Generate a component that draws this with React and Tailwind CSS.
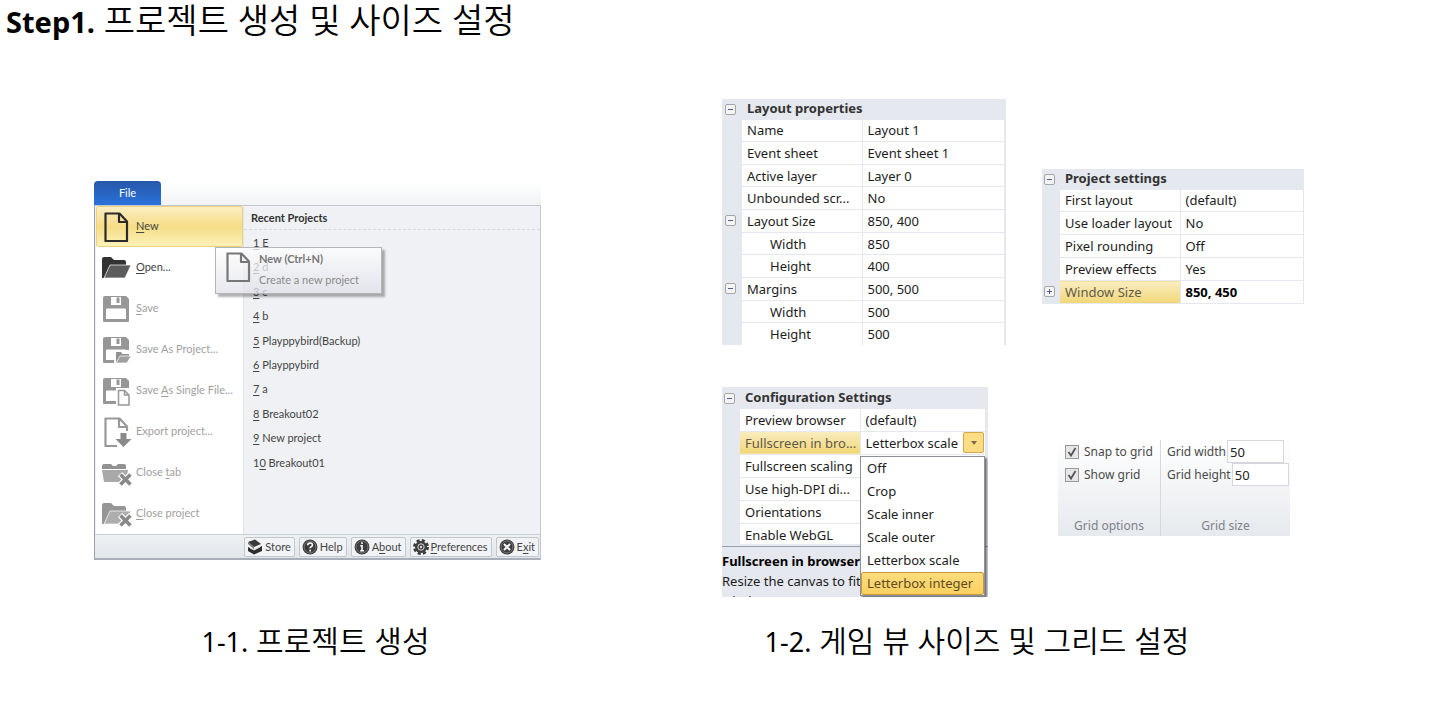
import { useState } from 'react';

const DocShape = ({ color, back = '#fff' }) => (
  <path d="M3.500 1.500h14l7.500 8v19.500H3.500zM17 2v8h7.500" fill={back} stroke={color} strokeWidth="2.200" strokeLinejoin="round" />
);

const FloppyShape = ({ color }) => (
  <>
    <path d="M3 2h21l3 3v22a1 1 0 0 1-1 1H2a1 1 0 0 1-1-1V4a2 2 0 0 1 2-2z" fill={color} />
    <path d="M9 3h10v8H9z" fill="#fff" />
    <path d="M14.500 3.500h3v5.500h-3z" fill={color} />
    <path d="M4 15.500a1 1 0 0 1 1-1h18a1 1 0 0 1 1 1V25H4z" fill="#fff" />
  </>
);

const FolderShape = ({ front, back }) => (
  <>
    <path d="M0 6a2 2 0 0 1 2-2h7l3 3h10a2 2 0 0 1 2 2v4H9L2 25H0z" fill={back} />
    <path d="M8 12h21l-6 13H2z" fill={front} stroke="#fff" strokeWidth=".7" />
  </>
);

const CrossShape = () => (
  <>
    <path d="M18 16l11 11M29 16l-11 11" stroke="#fff" strokeWidth="6" />
    <path d="M18.500 16.500l10 10M28.500 16.500l-10 10" stroke="#8a8a8a" strokeWidth="3.600" />
  </>
);

const icons = {
  doc: <DocShape color="#2b2b2b" back="none" />,
  open: <FolderShape front="#5c5c5c" back="#333" />,
  save: <FloppyShape color="#979797" />,
  saveProject: (
    <>
      <FloppyShape color="#979797" />
      <path d="M13 15h17v14H12z" fill="#fff" />
      <path d="M14 17h5l1.500 2H27v3H18l-4 6z" fill="#929292" />
      <path d="M18 21h11l-4 7H14z" fill="#a0a0a0" stroke="#fff" strokeWidth=".7" />
    </>
  ),
  saveFile: (
    <>
      <FloppyShape color="#979797" />
      <path d="M14 12h15v18H14z" fill="#fff" />
      <path d="M16.500 14.500h6l4.500 4.500v10H16.500zM22.500 14.500v4.500H27" fill="#fff" stroke="#979797" strokeWidth="1.500" />
    </>
  ),
  exportDoc: (
    <>
      <DocShape color="#999" />
      <path d="M15 14h15v16H15z" fill="#fff" />
      <path d="M18.500 16h6v6h5l-8 8-8-8h5z" fill="#8a8a8a" />
    </>
  ),
  closeTab: (
    <>
      <path d="M0 8a2 2 0 0 1 2-2h7l2 2h3l2-2h6a2 2 0 0 1 2 2v3H0z" fill="#929292" />
      <path d="M0 12h26l-2 12H2z" fill="#a9a9a9" />
      <CrossShape />
    </>
  ),
  closeProject: (
    <>
      <FolderShape front="#adadad" back="#969696" />
      <CrossShape />
    </>
  ),
};

const MenuIcon = ({ name }) => (
  <svg viewBox="0 0 30 30" className="h-[30px] w-[30px] shrink-0">{icons[name]}</svg>
);

const Disc = ({ children }) => (
  <svg viewBox="0 0 16 16" className="h-4 w-4">
    <circle cx="8" cy="8" r="7.500" fill="#3d3d3d" />
    <circle cx="8" cy="8" r="6" fill="none" stroke="#777" />
    {children}
  </svg>
);

const footerIcons = {
  Store: (
    <svg viewBox="0 0 16 16" className="h-4 w-4">
      <path d="M1 3l7-2.500 6 4.500-7 3z" fill="#3a3a3a" />
      <path d="M1 3l6 5v2L1 5z" fill="#777" />
      <path d="M1 8l6 3 8-4v5l-8 3.500L1 12z" fill="#2d2d2d" />
      <path d="M3 9l4 2 6-3" stroke="#ddd" fill="none" />
    </svg>
  ),
  Help: (
    <Disc>
      <path d="M5.700 6.300c0-3 4.800-3 4.800-.3 0 1.700-2.400 1.500-2.400 3.300M8.100 10.700v1.700" fill="none" stroke="#fff" strokeWidth="1.600" />
    </Disc>
  ),
  About: (
    <Disc>
      <path d="M8 3.300v1.800M6.300 6.800H8v4.700M6.200 11.700h3.800" fill="none" stroke="#fff" strokeWidth="1.600" />
    </Disc>
  ),
  Preferences: (
    <svg viewBox="0 0 16 16" className="h-4 w-4">
      <circle cx="8" cy="8" r="6.500" fill="none" stroke="#3d3d3d" strokeWidth="3" strokeDasharray="3 2.100" />
      <circle cx="8" cy="8" r="6" fill="#3d3d3d" />
      <circle cx="8" cy="8" r="3.200" fill="none" stroke="#ddd" />
      <circle cx="8" cy="8" r="1.200" fill="#ddd" />
    </svg>
  ),
  Exit: (
    <Disc>
      <path d="M5 5l6 6M11 5l-6 6" stroke="#fff" strokeWidth="2" />
    </Disc>
  ),
};

// Underlines the accelerator letter at the given index
const Accel = ({ text, at }) => {
  if (at === undefined) return <span>{text}</span>;
  return (
    <span>
      {text.slice(0, at)}
      <u className="underline-offset-2">{text[at]}</u>
      {text.slice(at + 1)}
    </span>
  );
};

const menuItems = [
  { label: 'New', at: 0, icon: 'doc' },
  { label: 'Open...', at: 0, icon: 'open' },
  { label: 'Save', at: 0, icon: 'save', disabled: true },
  { label: 'Save As Project...', icon: 'saveProject', disabled: true },
  { label: 'Save As Single File...', at: 5, icon: 'saveFile', disabled: true },
  { label: 'Export project...', icon: 'exportDoc', disabled: true },
  { label: 'Close tab', at: 6, icon: 'closeTab', disabled: true },
  { label: 'Close project', at: 0, icon: 'closeProject', disabled: true },
];

const recentProjects = [
  'E', 'd', 'c', 'b', 'Playppybird(Backup)', 'Playppybird', 'a', 'Breakout02', 'New project', 'Breakout01',
];

const footerItems = [
  { label: 'Store' },
  { label: 'Help' },
  { label: 'About', at: 1 },
  { label: 'Preferences', at: 0 },
  { label: 'Exit', at: 1 },
];

const FileMenu = () => (
  <div className="relative font-['Lato','Noto_Sans',sans-serif] text-[11px] text-[#444]">
    <div className="flex bg-linear-to-b from-white to-[#f1f3f5]">
      <button className="h-6 w-[67px] rounded-t-sm bg-linear-to-b from-[#2658a8] to-[#2a72dc] text-white">File</button>
    </div>
    <div className="border border-b-2 border-[#c3c8d0] border-b-[#a9aeb8] border-l-[#98a1ae] bg-[#eff1f5]">
      <div className="flex">
        <div className="ml-px w-[148px] border-r border-[#e2e4e8] bg-white">
          {menuItems.map((item) => (
            <button
              key={item.label}
              disabled={item.disabled}
              className={`flex h-[41px] w-full items-center gap-1 whitespace-nowrap pl-[5px] text-left ${
                item.label === 'New' ? 'rounded-xs border border-[#ecd27c] bg-linear-to-b from-[#fbeec2] via-[#f6dd85] to-[#fdf1b8]' : 'border border-transparent'
              } ${item.disabled ? 'text-[#a0a0a0]' : ''}`}
            >
              <MenuIcon name={item.icon} />
              <Accel text={item.label} at={item.at} />
            </button>
          ))}
        </div>
        <div className="min-w-0 flex-1">
          <h2 className="h-6 border-b border-dashed border-[#d5d8dd] pl-[7px] leading-6 font-bold text-[#333]">Recent Projects</h2>
          <ol className="grid h-[245px] grid-rows-10 pt-px pl-[9px]">
            {recentProjects.map((name, i) => (
              <li key={name} className="flex items-center">
                <button>
                  <Accel text={`${i + 1} ${name}`} at={i === 9 ? 1 : 0} />
                </button>
              </li>
            ))}
          </ol>
        </div>
      </div>
      <div className="flex justify-end gap-1 border-t border-[#c9cdd4] bg-linear-to-b from-[#eef1f4] to-[#e2e6ea] pt-[2px] pr-px pb-px">
        {footerItems.map((item) => (
          <button key={item.label} className="flex h-5 items-center gap-[2px] rounded-xs border border-[#c3c6cb] bg-[#f1f3f6] pr-[3px] pl-[2px]">
            {footerIcons[item.label]}
            <Accel text={item.label} at={item.at} />
          </button>
        ))}
      </div>
    </div>

    {/* Tooltip */}
    <div
      role="tooltip"
      className="absolute top-[66px] left-[121px] flex h-[47px] w-[167px] gap-2 border border-[#b5b5b5] bg-linear-to-b from-white/75 to-[#dfe0e8]/75 pl-2 text-[#8a8a8a] shadow-[3px_3px_2px_rgba(0,0,0,0.3)]"
    >
      <svg viewBox="0 0 27 30" className="mt-1 h-[30px] w-[27px]">
        <DocShape color="#777" back="none" />
      </svg>
      <div className="pt-[3px] leading-[21px] whitespace-nowrap">
        <p className="h-[18px] leading-4 font-bold text-[#777]">New (Ctrl+N)</p>
        <p>Create a new project</p>
      </div>
    </div>
  </div>
);

const Toggle = ({ open, label }) => (
  <button aria-label={label} aria-expanded={open} className="mx-auto block h-[11px] w-[11px] rounded-xs border border-[#a5a5a5] bg-[#f4f4f4]">
    <svg viewBox="0 0 9 9" className="h-[9px] w-[9px]">
      <path d={open ? 'M2 4.500h5' : 'M2 4.500h5M4.500 2v5'} stroke="#4a5f9c" />
    </svg>
  </button>
);

const PropertyTable = ({ title, rows, gutter = 'w-[18px]', className }) => (
  <table className={`w-full table-fixed border-collapse bg-[#e5e8ee] text-left text-[13px] leading-4 whitespace-nowrap text-[#1c1c1c] ${className}`}>
    <colgroup>
      <col className={gutter} />
      <col className="w-[120px]" />
      <col />
    </colgroup>
    <thead>
      <tr className="h-5">
        <td className="p-0 pr-1"><Toggle open label={title} /></td>
        <th colSpan={2} className="py-0 pb-[2px] pl-[5px] font-bold text-[#333]">{title}</th>
      </tr>
    </thead>
    <tbody>
      {rows.map((row, i) => (
        <tr key={i}>
          <td className="p-0 pr-1">{row.open !== undefined && <Toggle open={row.open} label={row.name} />}</td>
          <th
            scope="row"
            className={`overflow-hidden border-t border-r border-[#e5e8ee] py-0 font-normal ${row.child ? 'pl-7' : 'pl-[5px]'} ${
              row.active ? 'bg-linear-to-b from-[#f9edc0] to-[#f2d676] text-[#5f5a48]' : 'bg-white'
            }`}
          >
            {row.name}
          </th>
          <td className={`border-t border-[#e5e8ee] bg-white py-0 pl-[5px] ${row.bold ? 'font-bold text-black' : ''}`}>{row.value}</td>
        </tr>
      ))}
    </tbody>
  </table>
);

const layoutRows = [
  { name: 'Name', value: 'Layout 1' },
  { name: 'Event sheet', value: 'Event sheet 1' },
  { name: 'Active layer', value: 'Layer 0' },
  { name: 'Unbounded scr...', value: 'No' },
  { name: 'Layout Size', value: '850, 400', open: true },
  { name: 'Width', value: '850', child: true },
  { name: 'Height', value: '400', child: true },
  { name: 'Margins', value: '500, 500', open: true },
  { name: 'Width', value: '500', child: true },
  { name: 'Height', value: '500', child: true },
];

const projectRows = [
  { name: 'First layout', value: '(default)' },
  { name: 'Use loader layout', value: 'No' },
  { name: 'Pixel rounding', value: 'Off' },
  { name: 'Preview effects', value: 'Yes' },
  { name: 'Window Size', value: '850, 450', open: false, active: true, bold: true },
];

const scaleModes = ['Off', 'Crop', 'Scale inner', 'Scale outer', 'Letterbox scale', 'Letterbox integer'];

const ConfigPanel = () => {
  const [mode, setMode] = useState('Letterbox scale');

  const rows = [
    { name: 'Preview browser', value: '(default)' },
    {
      name: 'Fullscreen in bro...',
      active: true,
      value: (
        <button aria-haspopup="listbox" aria-expanded="true" className="flex h-4 w-full items-center justify-between pr-px">
          {mode}
          <span className="-my-1 flex h-[21px] w-[21px] items-center justify-center rounded-xs border border-[#d9a548] bg-[#fcdc84]">
            <svg viewBox="0 0 6 4" className="h-1 w-1.5"><path d="M0 0h6L3 4z" fill="#7a6a4a" /></svg>
          </span>
        </button>
      ),
    },
    { name: 'Fullscreen scaling', value: '' },
    { name: 'Use high-DPI di...', value: '' },
    { name: 'Orientations', value: '' },
    { name: 'Enable WebGL', value: '' },
  ];

  return (
    <div className="relative h-[210px] overflow-hidden bg-[#e5e8ee] pt-px text-[13px] text-[#1c1c1c]">
      <div className="h-[156px] overflow-hidden pr-[3px]">
        <PropertyTable title="Configuration Settings" rows={rows} className="h-[158px]" />
      </div>
      <div className="mt-[2px] border-t border-[#9aa0a8] pt-1 leading-5 whitespace-nowrap">
        <h3 className="font-bold text-black">Fullscreen in browser</h3>
        <p>Resize the canvas to fit<br />window</p>
      </div>

      {/* Open drop-down list */}
      <ul role="listbox" aria-label="Fullscreen in browser" className="absolute top-[69px] right-[3px] left-[138px] border border-[#8c9098] bg-white shadow-[2px_2px_2px_rgba(0,0,0,0.5)]">
        {scaleModes.map((m) => (
          <li
            key={m}
            role="option"
            aria-selected={m === mode}
            onClick={() => setMode(m)}
            className={`flex h-[23px] items-center border px-[5px] whitespace-nowrap ${
              m === 'Letterbox integer' ? 'rounded-xs border-[#c99a3a] bg-linear-to-b from-[#fddc7c] to-[#fdd060] text-[#5a4c20]' : 'border-transparent'
            }`}
          >
            {m}
          </li>
        ))}
      </ul>
    </div>
  );
};

const GridCheck = ({ id, label }) => (
  <div className="flex h-[23px] items-center gap-[5px]">
    <span className="relative h-[14px] w-[14px]">
      <input id={id} type="checkbox" defaultChecked className="peer block h-[14px] w-[14px] appearance-none border border-[#999] bg-[#e6e6e8]" />
      <svg viewBox="0 0 14 14" className="pointer-events-none absolute inset-0 hidden peer-checked:block">
        <path d="M3.500 7l2.500 3.500 4.500-7.500" fill="none" stroke="#555" strokeWidth="1.800" />
      </svg>
    </span>
    <label htmlFor={id}>{label}</label>
  </div>
);

const GridField = ({ id, label }) => (
  <div className="flex h-[23px] items-center gap-px">
    <label htmlFor={id}>{label}</label>
    <input id={id} defaultValue="50" className="h-[23px] w-[57px] border border-[#d5d7dc] bg-white px-[2px] text-[13px] text-[#222]" />
  </div>
);

const GridRibbon = () => (
  <div className="flex text-xs whitespace-nowrap text-[#4a4a4a]">
    <fieldset className="flex h-24 w-[103px] flex-col border-r border-[#d5d8dd] bg-linear-to-b from-white to-[#e6e9ed] pl-[7px]">
      <GridCheck id="snap" label="Snap to grid" />
      <GridCheck id="show" label="Show grid" />
      <div className="mt-auto -ml-[7px] pb-[2px] text-center text-[#7c828c]">Grid options</div>
    </fieldset>
    <fieldset className="flex h-24 flex-1 flex-col bg-linear-to-b from-white to-[#e6e9ed] pl-[6px]">
      <GridField id="grid-width" label="Grid width" />
      <GridField id="grid-height" label="Grid height" />
      <div className="mt-auto -ml-[6px] pb-[2px] text-center text-[#7c828c]">Grid size</div>
    </fieldset>
  </div>
);

const App = () => (
  <div className="bg-white font-['Noto_Sans','Noto_Sans_CJK_KR',sans-serif] text-black">
    <h1 className="h-10 pl-[6px] text-[34px] leading-10 font-[350]">
      <b className="text-[29px] font-bold">Step1.</b> 프로젝트 생성 및 사이즈 설정
    </h1>

    <main className="grid grid-cols-[447fr_582fr] gap-x-[181px] pt-[59px] pr-32 pl-[94px]">
      <figure className="flex flex-col justify-between">
        <div className="pt-[82px]">
          <FileMenu />
        </div>
        <figcaption className="h-10 pr-1 text-center text-[30px] leading-10 font-[350]">
          <span className="text-[27px] font-normal">1-1.</span> 프로젝트 생성
        </figcaption>
      </figure>

      <figure>
        <div className="grid grid-cols-[284fr_262fr] gap-x-9">
          <div className="h-[246px] overflow-hidden border-r-2 border-[#e5e8ee]">
            <PropertyTable title="Layout properties" rows={layoutRows} gutter="w-5" className="h-[246px]" />
          </div>
          <div className="pt-[70px]">
            <PropertyTable title="Project settings" rows={projectRows} className="h-[135px] border-r border-b border-[#e5e8ee]" />
          </div>
        </div>
        <div className="mt-[42px] grid grid-cols-[266fr_232fr] gap-x-[70px] pr-[14px]">
          <ConfigPanel />
          <div className="pt-[53px]">
            <GridRibbon />
          </div>
        </div>
        <figcaption className="mt-6 h-10 pr-[72px] text-center text-[30px] leading-10 font-[350]">
          <span className="text-[27px] font-normal">1-2.</span> 게임 뷰 사이즈 및 그리드 설정
        </figcaption>
      </figure>
    </main>
  </div>
);

export default App;
